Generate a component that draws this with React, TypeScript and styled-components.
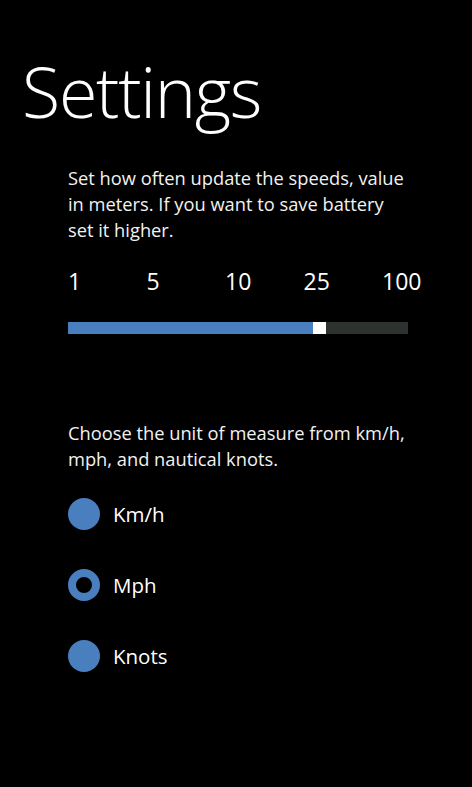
import React, { useState } from 'react';
import styled, { createGlobalStyle } from 'styled-components';

const GlobalStyle = createGlobalStyle`
    html, body {
        margin: 0;
        padding: 0;
        background: #000;
    }
`;

const accent = '#4a7fbf';

const Page = styled.div`
    min-height: 787px;
    background: #000;
    color: #fff;
    font-family: 'Open Sans', 'Noto Sans', sans-serif;
    padding-top: 56px;
    box-sizing: border-box;
`;

const Title = styled.h1`
    margin: 0 0 0 22px;
    font-size: 70px;
    line-height: 70px;
    font-weight: 300;
    letter-spacing: -1.3px;
`;

const Content = styled.div`
    margin-top: 39px;
    padding-left: 68px;
    width: 340px;
`;

const Description = styled.p<{ $gap?: number }>`
    margin: ${p => p.$gap ?? 0}px 0 0;
    font-size: 18.3px;
    line-height: 26px;
    color: #f2f2f2;
`;

const Ticks = styled.div`
    margin-top: 23px;
    display: grid;
    grid-template-columns: repeat(5, 78.5px);
    font-size: 23px;
    line-height: 30px;
`;

const Track = styled.div`
    margin-top: 26px;
    height: 12px;
    background: #2d322e;
    display: flex;
`;

const Fill = styled.div`
    background: ${accent};
    height: 100%;
`;

const Thumb = styled.div`
    width: 13px;
    height: 100%;
    background: #fff;
`;

const RadioList = styled.div`
    margin-top: 26px;
    display: flex;
    flex-direction: column;
    gap: 39px;
`;

const RadioRow = styled.label`
    display: flex;
    align-items: center;
    gap: 13px;
    height: 32px;
    font-size: 20.5px;
    cursor: pointer;
`;

const RadioDot = styled.span<{ $checked: boolean }>`
    width: 32px;
    height: 32px;
    border-radius: 50%;
    box-sizing: border-box;
    background: ${p => (p.$checked ? '#000' : accent)};
    border: ${p => (p.$checked ? `8px solid ${accent}` : 'none')};
`;

const ticks = ['1', '5', '10', '25', '100'];
const units = ['Km/h', 'Mph', 'Knots'];

const App: React.FC = () => {
    const [unit, setUnit] = useState('Mph');
    const progress = 245;

    return (
        <>
            <GlobalStyle />
            <Page>
                <Title>Settings</Title>
                <Content>
                    <Description>
                        Set how often update the speeds, value in meters. If you want to save battery set it higher.
                    </Description>
                    <Ticks>
                        {ticks.map(t => (
                            <span key={t}>{t}</span>
                        ))}
                    </Ticks>
                    <Track>
                        <Fill style={{ width: progress }} />
                        <Thumb />
                    </Track>
                    <Description $gap={86}>Choose the unit of measure from km/h, mph, and nautical knots.</Description>
                    <RadioList>
                        {units.map(u => (
                            <RadioRow key={u} onClick={() => setUnit(u)}>
                                <RadioDot $checked={unit === u} />
                                {u}
                            </RadioRow>
                        ))}
                    </RadioList>
                </Content>
            </Page>
        </>
    );
};

export default App;
